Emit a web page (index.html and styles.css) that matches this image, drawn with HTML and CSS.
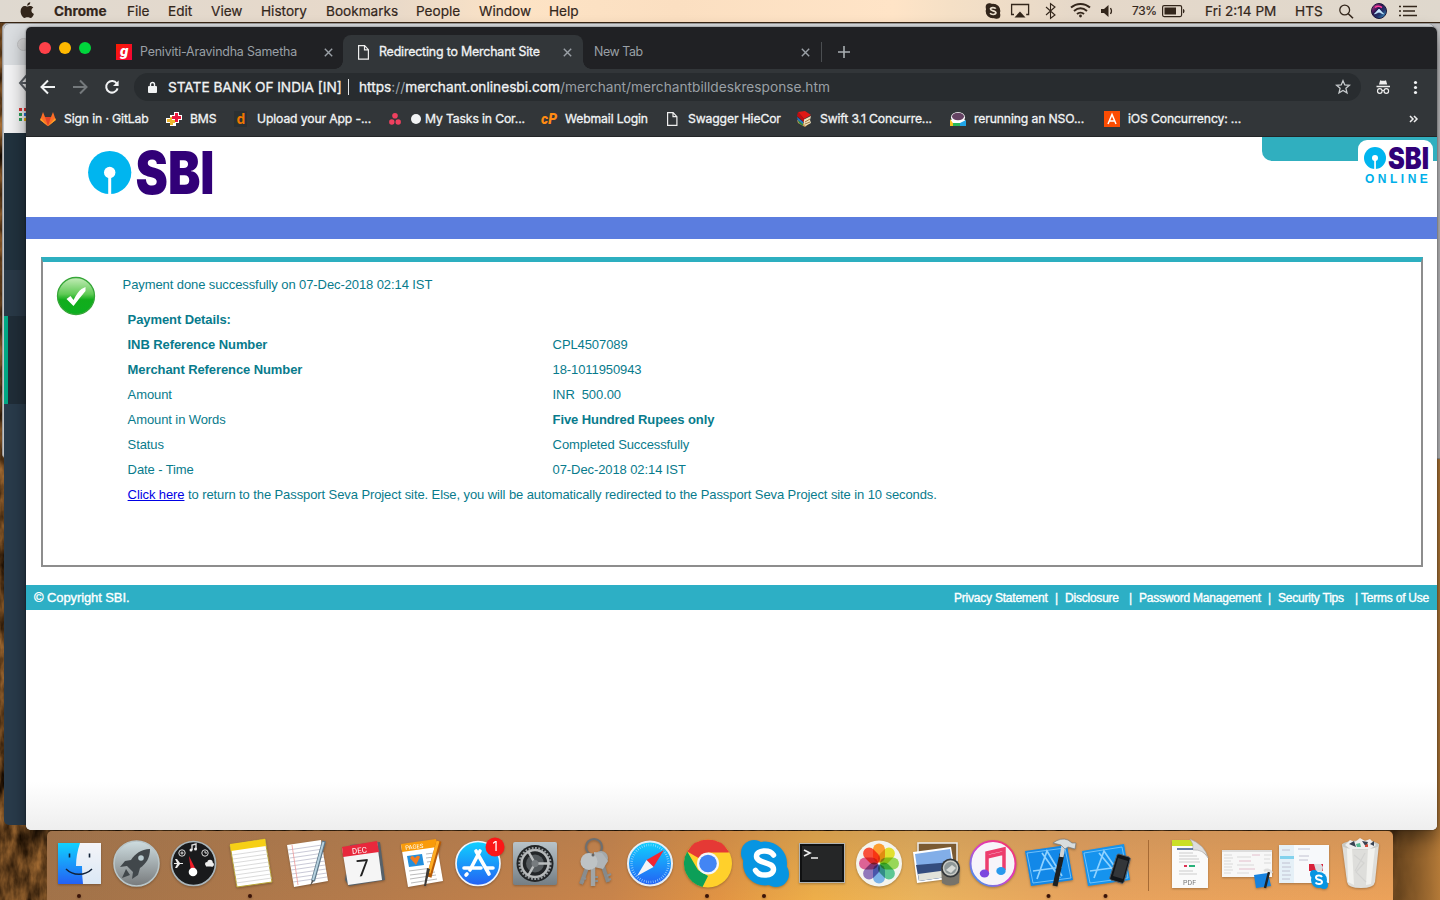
FILE: index.html
```
<!DOCTYPE html>
<html lang="en">
<head>
<meta charset="utf-8">
<title>Redirecting to Merchant Site</title>
<link rel="stylesheet" href="styles.css">
</head>
<body>
<div class="desktop">
  <svg class="wallpaper" width="1440" height="900">
    <defs>
      <filter id="grass" x="0" y="0" width="100%" height="100%" color-interpolation-filters="sRGB">
        <feTurbulence type="fractalNoise" baseFrequency="0.09 0.035" numOctaves="4" seed="8"/>
        <feColorMatrix values="0.9 0 0 0 -0.06  0.62 0 0 0 -0.06  0.32 0 0 0 -0.05  0 0 0 0 1"/>
      </filter>
      <linearGradient id="glow" x1="0" x2="1" y1="0" y2="0">
        <stop offset="0" stop-color="#a87038" stop-opacity="0"/><stop offset=".88" stop-color="#6d481f" stop-opacity=".6"/><stop offset=".91" stop-color="#6d481f" stop-opacity=".9"/><stop offset="1" stop-color="#b47a38"/>
      </linearGradient>
    </defs>
    <rect width="1440" height="900" filter="url(#grass)"/>
    <rect x="1000" width="440" height="900" fill="url(#glow)"/>
  </svg>

  <div class="back-window far"></div>
  <div class="back-window near">
    <div class="near-title"><i></i></div>
    <div class="near-tools">
      <svg width="22" height="68" viewBox="0 0 22 68"><path d="M23 10l-7 8 7 8M16 18h7" fill="none" stroke="#5b6066" stroke-width="2"/><path d="M15 43h3v3h-3z" fill="#d33"/><path d="M20 43h3v3h-3z" fill="#d33"/><path d="M15 48h3v3h-3zM15 53h3v3h-3z" fill="#2a9d58"/><path d="M20 48h3v3h-3z" fill="#2878e0"/><path d="M20 53h3v3h-3z" fill="#eeb211"/></svg>
    </div>
    <div class="near-nav"></div>
    <div class="near-hover"></div>
    <div class="near-active"></div>
  </div>

  <header class="menubar">
    <svg width="54" height="22" viewBox="0 0 54 22"><path fill="#33261b" d="M30.300 2.300c.1 1.800-1.400 3.400-3.200 3.400-.1-1.700 1.400-3.300 3.200-3.400zM27.200 6.600c.8 0 1.700-.7 3-.7 1.200 0 2.400.6 3.100 1.600-2.800 1.600-2.300 5.300.6 6.400-.7 1.900-2 4-3.400 4-1.100 0-1.600-.7-3-.7s-2 .7-3 .7c-1.800 0-3.900-3.600-3.900-6.600 0-3.200 2-5.200 4-5.200 1.200 0 2 .5 2.600.5z"/></svg>
    <b>Chrome</b><span>File</span><span>Edit</span><span>View</span><span>History</span><span>Bookmarks</span><span>People</span><span>Window</span><span>Help</span>
    <svg class="status" width="148" height="22" viewBox="980 0 148 22" fill="none" stroke="#33261b" stroke-width="1.3">
      <circle cx="993" cy="11" r="6.700" fill="#33261b"/><circle cx="989.500" cy="7" r="3.200" fill="#33261b"/><circle cx="996.500" cy="15" r="3.200" fill="#33261b"/>
      <path d="M995.700 8.700c-.6-1.500-5.200-1.700-5.200.4 0 2.200 5.400 1.300 5.400 3.700 0 2.200-5 2.200-5.700.2" stroke="#eadfce" stroke-width="1.700"/>
      <path d="M1014 14.500h-2.400v-10h17v10h-2.400"/><path d="M1020 11.500l5.500 6h-11z" fill="#33261b" stroke="none"/>
      <path d="M1046 7l9 8-4.500 3.300V3.700L1055 7l-9 8" stroke-width="1.100"/>
      <path d="M1071 7.500c5.500-4.800 13.500-4.800 19 0M1074 11c4-3.400 9-3.400 13 0M1077 14c2-1.800 5-1.800 7 0" stroke-width="2"/><circle cx="1080.500" cy="16" r="1.400" fill="#33261b" stroke="none"/>
      <path d="M1101 9h3l4.500-4v12l-4.500-4h-3z" fill="#33261b" stroke="none"/><path d="M1110.500 8c1.200 1.800 1.200 4.200 0 6M1112.700 6.300" />
    </svg>
    <span class="pct">73%</span>
    <svg width="44" height="22" viewBox="1160 0 44 22"><rect x="1161.600" y="5.600" width="19" height="11" rx="1.500" fill="none" stroke="#33261b" stroke-width="1.200"/><path d="M1163.500 7.500h11.500v7h-11.500z" fill="#33261b"/><path d="M1182 9c2 .2 2 4 0 4.200z" fill="#33261b"/></svg>
    <span>Fri 2:14 PM</span><span class="hts">HTS</span>
    <svg width="104" height="22" viewBox="1336 0 104 22" fill="none" stroke="#33261b">
      <defs><linearGradient id="siri" x2="1" y2="1"><stop stop-color="#e33a9c"/><stop offset=".4" stop-color="#281650"/><stop offset=".65" stop-color="#23376f"/><stop offset="1" stop-color="#43b9df"/></linearGradient></defs>
      <circle cx="1344.700" cy="10" r="4.900" stroke-width="1.300"/><path d="M1348.300 13.700l4.700 4.600" stroke-width="1.600"/>
      <circle cx="1379" cy="11" r="7.500" fill="url(#siri)" stroke="#1d163b" stroke-width="1"/><path d="M1375 7.500q3-2.500 7 0" stroke="#ff3f9d" stroke-width="1.500"/><path d="M1374.500 14l4.500-5 4.500 5-4.500-2z" fill="#d3e8ff" stroke="#bfeaff" stroke-width=".8"/>
      <path d="M1403 6.500h14M1403 11h12M1403 15.500h14M1399 6.500h2M1399 11h2M1399 15.500h2" stroke-width="1.700"/>
    </svg>
  </header>

  <main class="browser">
    <div class="tabstrip">
      <div class="lights"><i class="red"></i><i class="yellow"></i><i class="green"></i></div>
      <div class="tab first">
        <svg width="16" height="16"><defs><linearGradient id="gaana" y2="1" x2="1"><stop stop-color="#f91d00"/><stop offset="1" stop-color="#f5043b"/></linearGradient></defs><rect width="16" height="16" fill="url(#gaana)"/><text x="4" y="11.500" class="gaana">g</text></svg>
        <span>Peniviti-Aravindha Sametha</span><svg class="x" width="9" height="9"><path d="M.8.800l7.400 7.400M8.200.8L.8 8.200"/></svg>
      </div>
      <div class="tab active">
        <svg width="11" height="15" fill="none" stroke="#eee" stroke-width="1.200"><path d="M.6.700h6l3.800 4v9.500H.6zM6.500.700v4.200h4"/></svg>
        <span>Redirecting to Merchant Site</span><svg class="x" width="9" height="9"><path d="M.8.800l7.400 7.400M8.200.8L.8 8.200"/></svg>
      </div>
      <div class="tab last"><span>New Tab</span><svg class="x" width="9" height="9"><path d="M.8.800l7.400 7.400M8.200.8L.8 8.200"/></svg></div>
      <svg class="plus" width="12" height="12"><path d="M6 0v12M0 6h12" stroke="#a9afb2" stroke-width="1.600"/></svg>
    </div>
    <div class="toolbar">
      <svg width="108" height="32" viewBox="26 71 108 32" fill="none" stroke="#f1f3f4" stroke-width="2">
        <path d="M55 87H42M48 80.500L41.500 87l6.500 6.500"/><path d="M73 87h13M80 80.500l6.500 6.500-6.500 6.500" stroke="#74797c"/>
        <path d="M116.800 83.500a5.800 5.800 0 1 0 .8 4.900"/><path d="M118.600 80.500v5.500H113z" fill="#f1f3f4" stroke="none"/>
      </svg>
      <div class="omnibox">
        <svg width="9" height="13"><path d="M2.500 6V3.500a2 2 0 0 1 4 0V6" fill="none" stroke="#f1f3f4" stroke-width="1.400"/><rect y="5" width="9" height="7" rx="1" fill="#f1f3f4"/></svg>
        <span class="issuer">STATE BANK OF INDIA [IN]</span><i class="bar"></i>
        <span class="url"><span class="host">https</span>://<span class="host">merchant.onlinesbi.com</span>/merchant/merchantbilldeskresponse.htm</span>
        <svg class="star" width="16" height="16" viewBox="0 0 16 16"><path d="M8 1.700l1.800 4.200 4.600.4-3.500 3 1.100 4.500L8 11.400l-4 2.400 1.100-4.500-3.500-3 4.600-.4z" fill="none" stroke="#c6cacc" stroke-width="1.300"/></svg>
      </div>
      <svg class="tools" width="60" height="24" viewBox="1370 75 60 24"><path d="M1379 84.500l1.200-4.200 1.500.5h3l1.300-.5 1.200 4.200z" fill="#eee"/><path d="M1376.500 86.500h13.500" stroke="#eee" stroke-width="1.300"/><g fill="none" stroke="#eee" stroke-width="1.200"><circle cx="1379.800" cy="91" r="2.300"/><circle cx="1386.300" cy="91" r="2.300"/><path d="M1382 90.500h2"/></g><g fill="#f1f3f4"><circle cx="1415.500" cy="82.500" r="1.600"/><circle cx="1415.500" cy="87.500" r="1.600"/><circle cx="1415.500" cy="92.500" r="1.600"/></g></svg>
    </div>
    <nav class="bookmarks">
      <svg viewBox="0 0 16 16"><path d="M3 1l2 5h6l2-5 2.800 8L8 15.200.2 9z" fill="#fc6d26"/><path d="M5 6h6l-3 9z" fill="#e24329"/><path d="M.9 7L.2 9 8 15.200zM15.100 7l.7 2L8 15.200z" fill="#fca326"/></svg><span>Sign in · GitLab</span>
      <svg viewBox="0 0 16 16"><path d="M8 1h5v3h3v5h-3v3h-3v3H4v-3H0V7h4V4h4z" fill="#fff"/><path d="M9 2h3v3h3v3h-3v3H9V8H6V5h3z" fill="#e9173c"/><path d="M4 6h2v3h3v3H7v2H4v-3H1V8h3z" fill="#efb730"/></svg><span>BMS</span>
      <svg viewBox="0 0 16 16"><rect x="1" width="13" height="16" fill="#2a3033"/><text x="3.500" y="12.800" class="d-icon">d</text></svg><span>Upload your App -...</span>
      <svg viewBox="0 0 16 16" fill="#f0405f"><circle cx="8" cy="4.800" r="2.800"/><circle cx="4.800" cy="11" r="2.700"/><circle cx="11.200" cy="11" r="2.700"/></svg><span class="task"><i></i>My Tasks in Cor...</span>
      <svg viewBox="0 0 16 16"><text x="0" y="12.500" class="cp" textLength="16">cP</text></svg><span>Webmail Login</span>
      <svg viewBox="0 0 16 16" fill="none" stroke="#eee" stroke-width="1.200"><path d="M3.600 1.700h5.500l3.800 4v8.700H3.600zM9 1.700v4h4"/></svg><span>Swagger HieCor</span>
      <svg viewBox="0 0 16 16"><path d="M1 9l7 3 6-3v3l-5 4-7-4z" fill="#c79b55"/><path d="M1 6l6 5v3L2 10z" fill="#2673ca"/><path d="M2 9l5 4v2l-4-3z" fill="#338a38"/><path d="M7 9l8-4-1 4 1 3-6 3z" fill="#eee1bd"/><path d="M9 11l5-3M9 13l5-2" stroke="#a37b42"/><path d="M2 1l7-1 6 4-7 4z" fill="#e01815"/><path d="M2 1l6 7v3L1 5z" fill="#c20c12"/></svg><span>Swift 3.1 Concurre...</span>
      <svg viewBox="0 0 16 16"><path d="M1 9h14v3H1z" fill="#fff"/><ellipse cx="8" cy="6.500" rx="7" ry="5.500" fill="#fff"/><ellipse cx="8" cy="5.500" rx="6" ry="3.800" fill="#654363"/><path d="M0 8l5 7H0z" fill="#f4c51c"/><path d="M3 12h7v3H3z" fill="#29b85a"/><path d="M10 12l6-3v6h-6z" fill="#20a5e8"/></svg><span>rerunning an NSO...</span>
      <svg viewBox="0 0 16 16"><rect width="16" height="16" fill="#fc4c02"/><path d="M4 13L8 3.500 12 13M5.500 10h5" fill="none" stroke="#fff" stroke-width="1.500"/></svg><span>iOS Concurrency: ...</span>
      <svg class="more" viewBox="0 0 16 16" fill="none" stroke="#eee" stroke-width="1.500"><path d="M4 5l3 3-3 3M8 5l3 3-3 3"/></svg>
    </nav>

    <section class="page">
      <div class="brand">
        <svg width="130" height="44" viewBox="0 0 130 44"><circle cx="21.700" cy="21.500" r="21.600" fill="#00b5ef"/><circle cx="21.700" cy="21.500" r="5.700" fill="#fff"/><path d="M20.200 24h3v20h-3z" fill="#fff"/><text x="47.500" y="42.500" class="sbi" textLength="79" lengthAdjust="spacingAndGlyphs">SBI</text></svg>
        <div class="teal"><svg width="75" height="53" viewBox="0 0 75 53"><rect width="75" height="60" rx="9" fill="#fff"/><circle cx="17" cy="18" r="11" fill="#00b5ef"/><circle cx="17" cy="18" r="3" fill="#fff"/><path d="M16.200 19h1.700v11h-1.700z" fill="#fff"/><text x="30" y="28.700" class="sbi small" textLength="41" lengthAdjust="spacingAndGlyphs">SBI</text><text x="7" y="42.500" class="online">ONLINE</text></svg></div>
      </div>
      <div class="blueband"></div>
      <div class="panel">
        <svg class="check" width="40" height="40"><defs><linearGradient id="ok" x2="0" y2="1"><stop stop-color="#c5edb9"/><stop offset=".45" stop-color="#5fca55"/><stop offset=".6" stop-color="#12ad1c"/><stop offset="1" stop-color="#0caf20"/></linearGradient></defs><circle cx="20" cy="20" r="18.500" fill="url(#ok)" stroke="#36a638" stroke-width="1.300"/><path d="M10.500 23l4-3 3 4q4-8 8-11l4-2v4q-6 7-12 15z" fill="#fff"/></svg>
        <div class="result">
          <p>Payment done successfully on 07-Dec-2018 02:14 IST</p>
          <div class="details">
            <b>Payment Details:</b><span></span>
            <b>INB Reference Number</b><span>CPL4507089</span>
            <b>Merchant Reference Number</b><span>18-1011950943</span>
            <span>Amount</span><span>INR&nbsp; 500.00</span>
            <span>Amount in Words</span><b>Five Hundred Rupees only</b>
            <span>Status</span><span>Completed Successfully</span>
            <span>Date - Time</span><span>07-Dec-2018 02:14 IST</span>
            <span class="wide"><a href="#">Click here</a> to return to the Passport Seva Project site. Else, you will be automatically redirected to the Passport Seva Project site in 10 seconds.</span>
          </div>
        </div>
      </div>
      <footer><span class="copy">© Copyright SBI.</span><span>Privacy Statement</span><i>|</i><span>Disclosure</span><i>|</i><span>Password Management</span><i>|</i><span>Security Tips</span><i>|</i><span>Terms of Use</span></footer>
    </section>
  </main>

  <nav class="dock">
    <svg viewBox="0 0 57 69"><defs><linearGradient id="fi" x2="0" y2="1"><stop stop-color="#10d2ff"/><stop offset="1" stop-color="#2460f4"/></linearGradient><linearGradient id="fw" x2="0" y2="1"><stop stop-color="#f4f4f8"/><stop offset="1" stop-color="#dbe8f5"/></linearGradient></defs><path d="M7 12h43v41H7z" fill="url(#fw)"/><path d="M7 12h22q-4 12-4 23h6q0 10 1 18H7z" fill="url(#fi)"/><path d="M18.500 22.500v4M38.500 22.500v4" stroke="#102138" stroke-width="1.600"/><path d="M15 38c7 7 19 7 26 0" fill="none" stroke="#102138" stroke-width="1.500"/><circle class="run" cx="28" cy="65" r="2"/></svg>
    <svg viewBox="0 0 57 69"><defs><linearGradient id="la" x2="0" y2="1"><stop stop-color="#cedde0"/><stop offset="1" stop-color="#777a7c"/></linearGradient></defs><circle cx="28.500" cy="32.500" r="22.500" fill="url(#la)" stroke="#b9c6c9" stroke-width="1.600"/><path d="M42 18c-9 0-15 5-19 11l-6 1-5 6 7-1 6 6-1 7 6-4 2-7c6-4 10-10 10-19zM18 38l-4 9 8-3" fill="#41474b"/><circle cx="33" cy="27" r="2.800" fill="#b9cbd0"/></svg>
    <svg viewBox="0 0 57 69"><circle cx="28.500" cy="32.500" r="22" fill="#191a1c" stroke="#aab5ba" stroke-width="1.700"/><path d="M24 25l7 14-5 2z" fill="#ef1c27"/><circle cx="28" cy="41" r="4.300" fill="#fff"/><g fill="none" stroke="#ddd"><circle cx="17" cy="22" r="3.200"/><circle cx="17" cy="22" r="1"/><circle cx="40" cy="22" r="3.200"/><path d="M40 20v2h2"/><path d="M27 19v-5l4-1v5" stroke-width="1.400"/></g><g fill="#eee"><circle cx="26" cy="19" r="1.500"/><circle cx="30.500" cy="18" r="1.500"/><path d="M9 32h3l-2-4h2l3 4h3v1h-3l-3 4h-2l2-4H9z"/><circle cx="42" cy="33" r="2"/><circle cx="45" cy="31.500" r="2.700"/><circle cx="47" cy="33.500" r="2"/><path d="M41 33h7v2.500h-7z"/></g></svg>
    <svg viewBox="0 0 57 69"><path d="M8 14l35-6 7 43-35 5z" fill="#fff" stroke="#b7a536"/><path d="M8 13l35-5 1 7-35 5z" fill="#f6cf16"/><path d="M10 24l35-5M11 28l35-5M11 32l35-5M12 36l35-5M12 40l36-5M13 44l35-5M14 48l35-5M14 52l36-5" stroke="#ccc" stroke-width=".7"/><circle class="run" cx="28" cy="65" r="2"/></svg>
    <svg viewBox="0 0 57 69"><path d="M8 14l34-5 7 41-34 6z" fill="#fff"/><path d="M9 19l34-5M10 23l34-5M11 27l34-5M11 31l34-5M12 35l34-5M12 39l34-5M13 43l34-5M14 47l34-5M14 51l34-5" stroke="#bbc" stroke-width=".8"/><path d="M13 14l6 40" stroke="#e99" stroke-width=".8"/><path d="M45 10L34 50" stroke="#5d788a" stroke-width="4"/><path d="M44.500 11L34 49" stroke="#b6d1df" stroke-width="2"/><path d="M33 49l-2 6 4-5z" fill="#555"/></svg>
    <svg viewBox="0 0 57 69"><path d="M14 14l30-3 5 38-36 6-4-6z" fill="#56616a"/><path d="M6 17l35-6 5 38-34 5z" fill="#f5f5f5"/><path d="M6 16l35-6 2 11-36 5z" fill="#e8283c"/><text x="16" y="22" class="cal" transform="rotate(-6 25 20)">DEC</text><text x="20" y="45" class="day" transform="rotate(-6 28 35)">7</text></svg>
    <svg viewBox="0 0 57 69"><path d="M8 14l35-5 7 41-35 6z" fill="#fff"/><path d="M8 13l35-5 1 8-35 5z" fill="#f99b0a"/><text x="12" y="18" class="pages" transform="rotate(-7 20 15)">PAGES</text><path d="M14 25l15-2 2 11-15 2z" fill="#238fdd"/><path d="M17 27q2-4 5 0 3-4 5-1l-4 8z" fill="#f37b21"/><path d="M33 23l8-1M33 27l8-1M34 31l7-1M16 40l23-3M17 44l25-3M17 48l26-4M18 52l26-4" stroke="#bbb"/><path d="M46 10L36 46" stroke="#b75b07" stroke-width="5"/><path d="M45 10L36 42" stroke="#ffac22" stroke-width="3"/><path d="M37 38l-3 12-1 5-2 0 3-18z" fill="#3e3a36"/></svg>
    <svg viewBox="0 0 57 69"><circle cx="28" cy="32.500" r="22" fill="url(#fi)" stroke="#eff4fb" stroke-width="1.700"/><path d="M30 20L20 39M26 20l13 23M14 37h17M37 37h6M17 43l-1 1" stroke="#fff" stroke-width="3.600" stroke-linecap="round"/><circle cx="45" cy="16" r="9.500" fill="#fb1717"/><text x="42.500" y="20" class="badge">1</text></svg>
    <svg viewBox="0 0 57 69"><defs><linearGradient id="pr" x2="0" y2="1"><stop stop-color="#b8c3c9"/><stop offset="1" stop-color="#747e84"/></linearGradient></defs><rect x="6" y="11" width="44" height="43" rx="2" fill="url(#pr)"/><circle cx="28" cy="32.500" r="18.500" fill="#222527"/><circle cx="28" cy="32.500" r="13.500" fill="none" stroke="#b6b9ba" stroke-width="2.500"/><circle cx="28" cy="32.500" r="15.500" fill="none" stroke="#9a9fa2" stroke-width="2.200" stroke-dasharray="1.800 1.500"/><circle cx="28" cy="32.500" r="9" fill="#565b5e"/><path d="M28 32.500L21 20M28 32.500h15M28 32.500L21 45" stroke="#bbbebf" stroke-width="2.500"/><circle cx="28" cy="32.500" r="3.500" fill="#777c7f"/></svg>
    <svg viewBox="0 0 57 69"><circle cx="30" cy="16" r="8" fill="none" stroke="#6e6f70" stroke-width="2.200"/><path d="M24 34l-7 19" stroke="#888c8e" stroke-width="4"/><path d="M38 32l6 19" stroke="#85898b" stroke-width="4"/><path d="M29 35v20" stroke="#a1a5a7" stroke-width="4.500"/><circle cx="37" cy="27" r="7" fill="#a3a8aa"/><path d="M30 21l8 1 6 8-5 8-9-2z" fill="#b0b5b8"/><circle cx="25" cy="30.500" r="8.500" fill="#bec3c5"/><path d="M18 46l4 2M17 50l3 1M31 46h3M31 50h3M43 45l4-2M44 49l3-1" stroke="#8b8f91" stroke-width="2"/><circle cx="29" cy="24" r="1.500" fill="#666"/></svg>
    <svg viewBox="0 0 57 69"><circle cx="29" cy="32.500" r="22" fill="url(#fi)" stroke="#e7edf3" stroke-width="2"/><circle cx="29" cy="32.500" r="18.500" fill="none" stroke="#a4d9ff" stroke-width="2.500" stroke-dasharray=".6 1.700"/><path d="M43 19L32.500 36 25.500 29z" fill="#f32532"/><path d="M16 45l9.500-16 7 7z" fill="#f3f4f6"/></svg>
    <svg viewBox="0 0 57 69"><circle cx="29" cy="32.500" r="24" fill="#ffd02b"/><path d="M29 32.500L8.200 20.500a24 24 0 0 1 41.600 0v1H29z" fill="#e53935"/><path d="M8.200 20.500L19 39l10 6-5.500 11A24 24 0 0 1 8.200 20.500z" fill="#0c9f58"/><circle cx="29" cy="32.500" r="11" fill="#f5f7f8"/><circle cx="29" cy="32.500" r="8.800" fill="#4285f4"/><circle class="run" cx="28" cy="65" r="2"/></svg>
    <svg viewBox="0 0 57 69"><g fill="#0795e2"><circle cx="29" cy="32.500" r="22"/><circle cx="18" cy="22" r="13"/><circle cx="40" cy="43" r="13"/></g><path d="M37.500 24c-4-6-17-5-17 1.300 0 7.500 17 5 17 13 0 7-14 8-18 1" fill="none" stroke="#fff" stroke-width="5.500" stroke-linecap="round"/><circle class="run" cx="28" cy="65" r="2"/></svg>
    <svg viewBox="0 0 57 69"><path d="M6 12h46v40H6z" fill="#b2b3b1"/><path d="M8 14h42v36H8z" fill="#252627" stroke="#101112" stroke-width="2"/><path d="M11 19l6 3-6 3M18 27h7" fill="none" stroke="#eee" stroke-width="1.700"/></svg>
    <svg viewBox="0 0 57 69"><circle cx="29" cy="32.500" r="23" fill="#f4f4ee"/><g transform="translate(29 32.500)" class="petals"><rect x="-6" y="-20" width="12" height="19" rx="6" fill="#fd9a27"/><rect x="-6" y="-20" width="12" height="19" rx="6" transform="rotate(45)" fill="#e2df25"/><rect x="-6" y="-20" width="12" height="19" rx="6" transform="rotate(90)" fill="#94d651"/><rect x="-6" y="-20" width="12" height="19" rx="6" transform="rotate(135)" fill="#57c58f"/><rect x="-6" y="-20" width="12" height="19" rx="6" transform="rotate(180)" fill="#74afe7"/><rect x="-6" y="-20" width="12" height="19" rx="6" transform="rotate(225)" fill="#8c71b8"/><rect x="-6" y="-20" width="12" height="19" rx="6" transform="rotate(270)" fill="#dc5c91"/><rect x="-6" y="-20" width="12" height="19" rx="6" transform="rotate(315)" fill="#fa4932"/></g></svg>
    <svg viewBox="0 0 57 69"><path d="M11 12h39v31H11z" fill="#7b5a32" stroke="#eee" stroke-width="1.500"/><path d="M6 21l38-5 5 31-39 5z" fill="#fff"/><path d="M8 23l35-5 4 27-35 5z" fill="#82aee8"/><path d="M9 34l36-3 2 14-35 5z" fill="#344d7e"/><path d="M11 43l30-4 5 6-34 5z" fill="#e2e3da"/><path d="M34 36h19l-1 16q-9 5-17 0z" fill="#77736a"/><circle cx="43.500" cy="37" r="9.500" fill="#34383b"/><circle cx="43.500" cy="37" r="7" fill="#8e9798" stroke="#c9cbc6" stroke-width="1.500"/><path d="M39 39l6-5 4 3-5 5z" fill="#d7dad7"/></svg>
    <svg viewBox="0 0 57 69"><defs><linearGradient id="it" x1="1" x2="0" y2="1"><stop stop-color="#fc3656"/><stop offset=".5" stop-color="#d83ccc"/><stop offset="1" stop-color="#25a7f5"/></linearGradient></defs><circle cx="29" cy="32.500" r="22.500" fill="#f7f4fa" stroke="url(#it)" stroke-width="2"/><path d="M23 43V22l17-4v21M23 26l17-4" fill="none" stroke="#ed3d6e" stroke-width="3.500"/><ellipse cx="20.500" cy="42.500" rx="4.700" ry="4" fill="#7c46df"/><ellipse cx="37" cy="40" rx="4.700" ry="4" fill="#2999ed"/></svg>
    <svg viewBox="0 0 57 69"><path d="M4 20l42-6 6 35-42 6z" fill="#1288e8"/><path d="M6 22l38-5 6 30-38 5z" fill="none" stroke="#87cdfb" stroke-width=".8"/><path d="M16 48l10-28 15 25M12 40l29-4M21 22l18 25" fill="none" stroke="#8fd2ff" stroke-width="1.700"/><path d="M41 23l-7 32" stroke="#1c2023" stroke-width="5"/><path d="M40.500 26l2-12" stroke="#cfd3d4" stroke-width="4"/><path d="M32 12q8-6 15-3l4 3 4 0-1 6-7-2-3 2-4-4z" fill="#d9dddd" stroke="#747b80" stroke-width=".7"/><circle class="run" cx="27.500" cy="65" r="2"/></svg>
    <svg viewBox="0 0 57 69"><path d="M4 20l42-7 6 36-42 6z" fill="#1593ee"/><path d="M6 22l38-6 6 31-38 5z" fill="none" stroke="#87cdfb" stroke-width=".8"/><path d="M16 47l10-27 15 22M12 40l29-4M21 22l20 24" fill="none" stroke="#8fd2ff" stroke-width="1.700"/><path d="M39 24q0-1 2-1l10 3q2 1 1 3l-6 22q-1 2-3 1l-10-3q-2-1-1-3z" fill="#111519" stroke="#55606a"/><path d="M40 27l10 3-5 18-10-3z" fill="#333639"/><circle class="run" cx="27.500" cy="65" r="2"/></svg>
    <i class="separator"></i>
    <svg viewBox="0 0 57 69"><path d="M11 10h19l17 16v31H11z" fill="#fafafa"/><path d="M11 9h18l6 6H11z" fill="#cadf27"/><path d="M29 8q4 5 3 11 10-1 15 8-3-13-18-19z" fill="#ddd" stroke="#aaa" stroke-width=".6"/><path d="M16 18h16" stroke="#34538a" stroke-width="1.500"/><path d="M18 22h14M18 25h18M18 28h20M18 31h21M18 40h14M18 43h18" stroke="#ccc"/><path d="M23 34h3v2h-3z" fill="#d35"/><path d="M28 34h6v2h-6z" fill="#28b17a"/><text x="22" y="54" class="pdf" textLength="13">PDF</text></svg>
    <svg viewBox="0 0 57 69"><path d="M4 19h50v27H4z" fill="#f7f7f7"/><path d="M4 19h50v2H4z" fill="#ddd"/><path d="M6 24h8M6 27h9M6 30h7M6 33h9M6 36h8M6 39h9M6 42h7M19 26h14M19 34h17M19 42h12M46 24h7M46 28h6M46 32h7" stroke="#ccc" stroke-width=".7"/><path d="M21 30h12M21 38h16M34 24h8" stroke="#deb0c0" stroke-width=".8"/><path d="M36 44l14-2 3 13-15 2z" fill="#1682df"/><path d="M51 41l-4 16" stroke="#222" stroke-width="2.500"/><path d="M46 40q5-3 8 2" stroke="#ddd" stroke-width="2.500" fill="none"/></svg>
    <svg viewBox="0 0 57 69"><path d="M4 14h50v38H4z" fill="#f7f9fb"/><path d="M4 14h15v38H4z" fill="#e5f0f7"/><path d="M5 25h14v3H5z" fill="#83d2ed"/><path d="M7 19h8M7 32h8M7 36h9M7 40h8M7 44h9M7 48h8M23 18h12M24 25h10M24 29h9" stroke="#bbc" stroke-width=".9"/><path d="M34 33h14v7H34z" fill="#d8223a"/><path d="M39 33l7 0 2 3-1 5-6-1z" fill="#d9dde2"/><g fill="#0795e2"><circle cx="44" cy="49" r="8"/><circle cx="39" cy="43" r="4"/><circle cx="49" cy="54" r="4"/></g><path d="M47 46c-1-2-6-2-6 .5 0 3 6 1.500 6 4.500 0 2.500-5 2.500-6.500.5" fill="none" stroke="#fff" stroke-width="2"/></svg>
    <svg viewBox="0 0 57 69"><path d="M10 13h37l-4 38q-1 6-14 6t-14-6z" fill="#dededb"/><path d="M15 17h5l2 37-6-3zM36 17h7l-4 36-5 1z" fill="#f2f2ef"/><path d="M22 24l10 8-8 9 10 10M33 22l-10 18" fill="none" stroke="#d3d3d1" stroke-width="1.200"/><ellipse cx="28.500" cy="14" rx="18.500" ry="4.500" fill="#c8c9c5"/><path d="M13 14l5-5 5 2 5-4 5 3 5-2 6 6-6 4H18z" fill="#eee"/><path d="M17 13l5-3 2 6zM30 10l6 1-2 5zM38 13l4-3v5z" fill="#394252"/><path d="M24 13l4-1 1 4h-4z" fill="#55b994"/><path d="M33 14l3-1v3h-3z" fill="#d34e3c"/></svg>
  </nav>
</div>
</body>
</html>
```
FILE: styles.css
```
* { box-sizing: border-box; }
body { margin: 0; font-family: Inter, "Liberation Sans", sans-serif; overflow: hidden; }
i { font-style: normal; }
.desktop { position: relative; width: 1440px; height: 900px; overflow: hidden; background: #5c3b17; }
.wallpaper { position: absolute; inset: 0; }
svg { display: block; flex: none; overflow: visible; }
.menubar { position: relative; height: 23px; display: grid; grid-template-columns: 54px 73px 41px 43px 50px 65px 90px 63px 70px 431px 152px 29px 44px 90px 41px 104px; align-items: center; font-size: 13.6px; line-height: 22px; color: #33261b; -webkit-text-stroke: .2px #33261b; white-space: nowrap; background: linear-gradient(90deg, #dfd9d0 0, #e8d9c9 27%, #fde3c5 36%, #fbdfc1 47%, #ffe4c7 62%, #f5e0c6 66%, #e5d8c9 75%, #dfd8cd 100%); border-bottom: 1px solid #392614; }
.menubar .status { justify-self: start; }
.menubar .pct { font-size: 12px; letter-spacing: -.4px; }
.menubar .hts { letter-spacing: .1px; }
.back-window { position: absolute; }
.far { left: 2px; top: 23px; width: 1442px; height: 436px; background: #c3c3c5; border-radius: 5px; border: 1px solid #999; }
.near { left: 4px; top: 24px; width: 1430px; height: 801px; border-radius: 5px; background: #293b4b; overflow: hidden; display: flex; flex-direction: column; }
.near-title { height: 41px; background: #dadde0; padding: 14px 0 0 13px; }
.near-title i { display: block; width: 13px; height: 13px; border-radius: 50%; background: #d2d2d3; border: 1px solid #bfc0c1; }
.near-tools { height: 68px; background: #f2f2f3; }
.near-nav { height: 137px; background: #21323e; }
.near-hover { height: 46px; background: #293947; }
.near-active { height: 88px; width: 24px; background: #202d38; border-left: 4px solid #00a783; }
.browser { position: absolute; left: 26px; top: 27px; width: 1411px; height: 803px; border-radius: 5px; overflow: hidden; background: #fff; box-shadow: 0 0 2px #0008, 0 8px 18px #0007; }
.tabstrip { height: 42px; background: #202124; display: flex; align-items: flex-start; color: #9aa0a6; font-size: 12.4px; letter-spacing: -.18px; }
.lights { width: 90px; display: flex; gap: 8px; padding: 15px 0 0 13px; }
.lights i { width: 12px; height: 12px; border-radius: 50%; }
.red { background: #ff4149; }
.yellow { background: #ffb900; }
.green { background: #00d53c; }
.tab { display: flex; align-items: center; height: 34px; margin-top: 8px; }
.tab .x { margin-left: auto; fill: none; stroke: #9aa0a6; stroke-width: 1.400; }
.tab span { padding-bottom: 1px; }
.first { width: 217px; gap: 8px; margin-right: 10px; }
.active { position: relative; width: 240px; background: #323639; border-radius: 8px 8px 0 0; padding: 0 11px 0 15px; gap: 10px; color: #f1f3f4; -webkit-text-stroke: .3px #f1f3f4; }
.active::before, .active::after { content: ""; position: absolute; width: 8px; height: 8px; bottom: 0; }
.active::before { right: 100%; background: radial-gradient(circle at 0 0, transparent 7.500px, #323639 8px); }
.active::after { left: 100%; background: radial-gradient(circle at 100% 0, transparent 7.500px, #323639 8px); }
.last { width: 239px; padding: 0 11px; border-right: 1px solid #4b4e51; height: 20px; margin-top: 15px; letter-spacing: -.4px; }
.plus { margin: 19px 0 0 16px; }
.gaana { font: italic 900 15px Roboto, sans-serif; fill: #fff; }
.toolbar { height: 34px; background: #323639; display: flex; align-items: center; padding-top: 2px; color: #f1f3f4; }
.omnibox { display: flex; align-items: center; width: 1227px; height: 28px; border-radius: 14px; background: #282c2f; padding: 0 10px 0 14px; font-size: 13.7px; white-space: nowrap; }
.issuer { margin-left: 11px; width: 180px; letter-spacing: -.04px; -webkit-text-stroke: .3px #f1f3f4; }
.bar { width: 1px; height: 16px; background: #e4e6e8; margin-right: 10px; }
.url { color: #9aa0a6; }
.host { color: #f1f3f4; -webkit-text-stroke: .3px #f1f3f4; }
.star { margin-left: auto; }
.tools { margin-left: 9px; }
.bookmarks { height: 34px; background: #323639; border-bottom: 1px solid #232527; display: grid; grid-template-columns: 24px 102px 24px 43px 24px 130px 24px 130px 24px 99px 24px 108px 24px 130px 24px 130px 24px 278px 20px; padding: 0 0 2px 14px; align-items: center; font-size: 12.2px; letter-spacing: -.13px; color: #f1f3f4; -webkit-text-stroke: .3px #f1f3f4; white-space: nowrap; }
.bookmarks svg { width: 16px; height: 16px; -webkit-text-stroke: 0; }
.task { display: flex; align-items: center; gap: 4px; }
.task i { width: 10px; height: 10px; border-radius: 50%; background: #f1f3f4; }
.d-icon { font: bold 14px "Open Sans", sans-serif; fill: #ee7700; }
.cp { font: italic 900 14px Roboto, sans-serif; fill: #ff8b13; }
.page { height: 693px; display: flex; flex-direction: column; font-family: "Liberation Sans", Arial, sans-serif; font-size: 13px; letter-spacing: -.094px; color: #087b8c; background: linear-gradient(#fff 93%, #eee); }
.brand { height: 80px; flex: none; display: flex; justify-content: space-between; padding: 14px 0 0 62px; letter-spacing: 0; }
.teal { width: 175px; height: 24px; margin-top: -14px; border-radius: 0 0 0 10px; background: #30afbf; padding: 3px 4px 0 96px; }
.sbi { font: 900 59px Inter, sans-serif; fill: #310078; }
.sbi.small { font-size: 29.500px; }
.online { font: bold 12px "Liberation Sans", sans-serif; letter-spacing: 3.500px; fill: #00afe9; }
.blueband { height: 22px; flex: none; background: #5b7ddf; }
.panel { height: 310px; flex: none; margin: 18px 14px 0 15px; border: 2px solid #8d8d8d; border-top: 5px solid #2dafc0; display: flex; padding-left: 13px; }
.check { margin-top: 14px; }
.result { margin-left: 26.600px; }
.result p { margin: 15px 0 15px; line-height: 15px; }
.details { display: grid; grid-template-columns: 425px 500px; grid-auto-rows: 25px; line-height: 25px; padding-left: 5px; white-space: nowrap; }
.wide { grid-column: 1 / 3; }
a { color: #0000e5; }
footer { height: 25px; flex: none; margin-top: 18px; background: #2dafc5; color: #fff; display: grid; grid-template-columns: 920px 101px 10px 64px 10px 129px 10px 77px 6px 70px; padding-left: 8px; line-height: 26px; font-size: 12px; white-space: nowrap; -webkit-text-stroke: .35px #fff; letter-spacing: -.22px; }
.copy { font-size: 13px; line-height: 25px; letter-spacing: -.1px; }
.dock { position: absolute; left: 47px; top: 831px; width: 1346px; height: 69px; border-radius: 5px 5px 0 0; padding-left: 4px; display: grid; grid-template-columns: repeat(19, 57.050px) 26px repeat(4, 57px); background: linear-gradient(#a0764f55, #df954811), linear-gradient(90deg, #9d7049 0, #b2794b 24%, #c7834b 42%, #e29443 50%, #efb049 57%, #ebb65f 65%, #e8a45f 77%, #eda35b 100%); }
.dock svg { width: 57px; height: 69px; filter: drop-shadow(0 1px 1px #0004); }
.separator { width: 1px; height: 51px; margin: 9px 0 0 13px; background: #a66a34; }
.petals { opacity: .95; }
.petals rect { mix-blend-mode: multiply; }
.run { fill: #3a1308; }
.cal { font: 8px Roboto, sans-serif; fill: #fff; }
.day { font: 23px Lato, sans-serif; fill: #222; }
.pages { font: 6px Roboto, sans-serif; fill: #fff; }
.badge { font: 13px Inter, sans-serif; fill: #fff; }
.pdf { font: 7px Roboto, sans-serif; fill: #777; }
```
